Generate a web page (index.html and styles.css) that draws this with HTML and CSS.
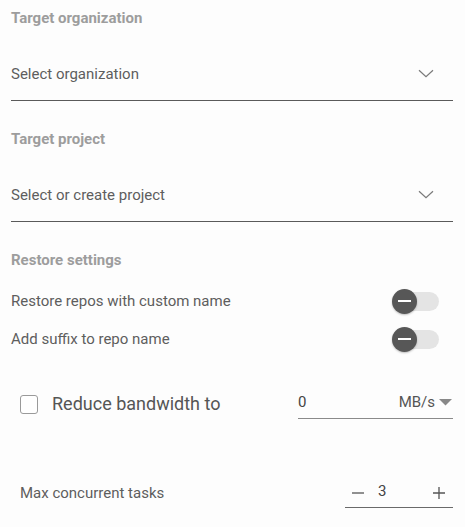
FILE: index.html
```html
<!DOCTYPE html>
<html lang="en">
<head>
    <meta charset="UTF-8">
    <meta name="viewport" content="width=device-width, initial-scale=1.0">
    <title>Restore settings</title>
    <link rel="stylesheet" href="styles.css">
</head>
<body>
    <div class="form">
        <div class="section-label">Target organization</div>
        <div class="select">
            <span>Select organization</span>
            <svg class="chevron" width="16" height="9" viewBox="0 0 16 9"><path d="M1 1.2 L8 7.8 L15 1.2" fill="none" stroke="#7a7a7a" stroke-width="1.2"/></svg>
        </div>

        <div class="section-label">Target project</div>
        <div class="select">
            <span>Select or create project</span>
            <svg class="chevron" width="16" height="9" viewBox="0 0 16 9"><path d="M1 1.2 L8 7.8 L15 1.2" fill="none" stroke="#7a7a7a" stroke-width="1.2"/></svg>
        </div>

        <div class="section-label">Restore settings</div>
        <div class="toggle-list">
            <div class="toggle-row">
                <span>Restore repos with custom name</span>
                <span class="toggle"><span class="track"></span><span class="thumb"></span></span>
            </div>
            <div class="toggle-row">
                <span>Add suffix to repo name</span>
                <span class="toggle"><span class="track"></span><span class="thumb"></span></span>
            </div>
        </div>

        <div class="bandwidth-row">
            <label class="check"><span class="box"></span>Reduce bandwidth to</label>
            <div class="bw-input">
                <span>0</span>
                <span class="unit">MB/s
                    <svg width="13" height="7" viewBox="0 0 13 7"><path d="M0 0 H13 L6.5 6.5 Z" fill="#888"/></svg>
                </span>
            </div>
        </div>

        <div class="tasks-row">
            <span>Max concurrent tasks</span>
            <div class="stepper">
                <svg width="12" height="12" viewBox="0 0 12 12"><path d="M0 6 H12" stroke="#555" stroke-width="1.3"/></svg>
                <span class="value">3</span>
                <svg class="plus" width="12" height="12" viewBox="0 0 12 12"><path d="M0 6 H12 M6 0 V12" stroke="#555" stroke-width="1.3"/></svg>
            </div>
        </div>
    </div>
</body>
</html>
```

FILE: styles.css
```css
body {
    margin: 0;
    background-color: #fdfdfd;
    font-family: 'Roboto', 'Liberation Sans', sans-serif;
    color: #5e5e5e;
}

.form {
    padding: 8px 12px 0 11px;
}

.section-label {
    font-size: 15px;
    font-weight: 700;
    line-height: 20px;
    color: #9d9d9d;
}

.select {
    display: flex;
    align-items: center;
    justify-content: space-between;
    margin: 36px 0 28px;
    padding: 0 19px 16px 0;
    font-size: 15px;
    line-height: 20px;
    border-bottom: 1px solid #5a5a5a;
}

.chevron {
    margin-top: -1px;
}

.toggle-list {
    margin-top: 12px;
}

.toggle-row {
    display: flex;
    align-items: center;
    justify-content: space-between;
    height: 38px;
    padding-right: 14px;
    font-size: 15px;
}

.toggle {
    position: relative;
    width: 47px;
    height: 25px;
}

.toggle .track {
    position: absolute;
    left: 10px;
    right: 0;
    top: 3px;
    height: 19px;
    border-radius: 10px;
    background-color: #e4e4e4;
}

.toggle .thumb {
    position: absolute;
    left: 0;
    top: 0;
    width: 25px;
    height: 25px;
    border-radius: 50%;
    background-color: #575757;
    box-shadow: 0 1px 2px rgba(0, 0, 0, 0.25);
}

.toggle .thumb::after {
    content: '';
    position: absolute;
    left: 6px;
    top: 11px;
    width: 13px;
    height: 2px;
    background-color: #fff;
}

.bandwidth-row {
    display: flex;
    align-items: flex-start;
    justify-content: space-between;
    margin-top: 34px;
    padding-left: 9px;
}

.check {
    display: flex;
    align-items: center;
    gap: 14px;
    margin-top: 2px;
    font-size: 18px;
    font-weight: 400;
    line-height: 20px;
    color: #555;
}

.check .box {
    width: 16px;
    height: 17px;
    border: 1px solid #9a9a9a;
    border-radius: 3px;
    background-color: #fff;
}

.bw-input {
    display: flex;
    justify-content: space-between;
    width: 155px;
    padding-bottom: 6px;
    font-size: 15px;
    line-height: 20px;
    color: #444;
    border-bottom: 1px solid #8a8a8a;
}

.unit {
    display: flex;
    align-items: center;
    gap: 4px;
    padding-right: 1px;
    color: #555;
}

.tasks-row {
    display: flex;
    align-items: flex-start;
    justify-content: space-between;
    margin-top: 64px;
    padding-left: 9px;
    font-size: 15px;
    line-height: 20px;
}

.stepper {
    display: flex;
    align-items: center;
    width: 101px;
    height: 20px;
    padding: 0 0 4px 7px;
    border-bottom: 1px solid #6a6a6a;
    color: #444;
}

.stepper .value {
    margin: -4px 0 0 14px;
}

.stepper .plus {
    margin-left: auto;
    margin-right: 8px;
}
```
